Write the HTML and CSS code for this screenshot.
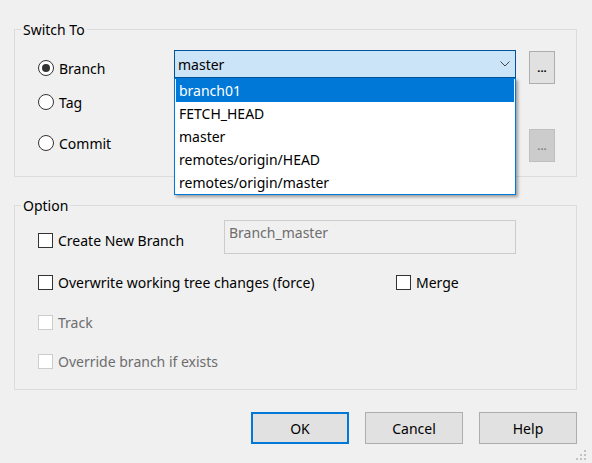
FILE: index.html
```html
<!DOCTYPE html>
<html>
<head>
<meta charset="utf-8">
<link rel="stylesheet" href="styles.css">
</head>
<body>
<div class="dialog">
  <fieldset class="group group-switch">
    <legend>Switch To</legend>
    <div class="switch-grid">
      <label class="opt opt-branch"><span class="radio checked"></span>Branch</label>
      <div class="combo-wrap">
        <div class="combo">
          <span>master</span>
          <svg class="chev" width="10" height="6" viewBox="0 0 10 6"><path d="M0.5 0.5 L5 5 L9.5 0.5" fill="none" stroke="#444" stroke-width="1"/></svg>
        </div>
        <ul class="dropdown">
          <li class="sel">branch01</li>
          <li>FETCH_HEAD</li>
          <li>master</li>
          <li>remotes/origin/HEAD</li>
          <li>remotes/origin/master</li>
        </ul>
      </div>
      <button class="more btn1">...</button>
      <label class="opt opt-tag"><span class="radio"></span>Tag</label>
      <label class="opt opt-commit"><span class="radio"></span>Commit</label>
      <div class="commit-box"></div>
      <button class="more btn2 disabled">...</button>
    </div>
  </fieldset>

  <fieldset class="group group-option">
    <legend>Option</legend>
    <div class="option-body">
      <div class="row row-a">
        <label class="chk chk-create"><span class="box"></span>Create New Branch</label>
        <div class="textbox">Branch_master</div>
      </div>
      <div class="row row-b">
        <label class="chk chk-overwrite"><span class="box"></span>Overwrite working tree changes (force)</label>
        <label class="chk"><span class="box"></span>Merge</label>
      </div>
      <div class="row row-c">
        <label class="chk disabled"><span class="box"></span>Track</label>
      </div>
      <div class="row row-d">
        <label class="chk disabled"><span class="box"></span>Override branch if exists</label>
      </div>
    </div>
  </fieldset>

  <div class="buttons">
    <button class="btn default">OK</button>
    <button class="btn">Cancel</button>
    <button class="btn">Help</button>
  </div>

  <svg class="grip" width="12" height="10" viewBox="0 0 12 10">
    <rect x="8" y="0" width="2" height="2" fill="#c2c2c2"/>
    <rect x="4" y="4" width="2" height="2" fill="#c2c2c2"/>
    <rect x="8" y="4" width="2" height="2" fill="#c2c2c2"/>
    <rect x="0" y="8" width="2" height="2" fill="#c2c2c2"/>
    <rect x="4" y="8" width="2" height="2" fill="#c2c2c2"/>
    <rect x="8" y="8" width="2" height="2" fill="#c2c2c2"/>
  </svg>
</div>
</body>
</html>
```

FILE: styles.css
```css
html, body {
  margin: 0;
  padding: 0;
  background: #f0f0f0;
}
body {
  font-family: "Noto Sans", "Open Sans", sans-serif;
  font-size: 14px;
  color: #000;
  width: 592px;
  height: 463px;
  overflow: hidden;
}
.dialog {
  position: relative;
  width: 592px;
  height: 463px;
  box-sizing: border-box;
  padding: 21px 15px 0 14px;
}
.group {
  margin: 0;
  padding: 0;
  border: 1px solid #dcdcdc;
  min-width: 0;
}
.group legend {
  margin-left: 6px;
  padding: 0 2px;
  line-height: 17px;
  height: 17px;
}
.switch-grid {
  display: grid;
  grid-template-columns: 123px 342px 26px;
  grid-template-rows: 34px 45px 33px;
  column-gap: 13px;
  padding: 12px 21px 14px 23px;
}
.opt {
  display: flex;
  align-items: center;
  gap: 5px;
  height: 16px;
  align-self: start;
  white-space: nowrap;
}
.opt-branch { grid-row: 1; grid-column: 1; margin-top: 10px; }
.opt-tag { grid-row: 2; grid-column: 1; margin-top: 10px; }
.opt-commit { grid-row: 3; grid-column: 1; margin-top: 6px; }
.radio {
  width: 14px;
  height: 14px;
  border: 1px solid #333;
  border-radius: 50%;
  background: #fff;
  flex: none;
  position: relative;
}
.radio.checked::after {
  content: "";
  position: absolute;
  left: 3px;
  top: 3px;
  width: 8px;
  height: 8px;
  border-radius: 50%;
  background: #333;
}
.combo-wrap {
  grid-row: 1;
  grid-column: 2;
  position: relative;
  align-self: start;
  z-index: 2;
}
.combo {
  height: 28px;
  box-sizing: border-box;
  border: 1px solid #005499;
  background: #cce4f7;
  display: flex;
  align-items: center;
  justify-content: space-between;
  padding: 0 5px 0 3px;
}
.chev { display: block; }
.dropdown {
  position: absolute;
  left: 0;
  top: 28px;
  width: 342px;
  box-sizing: border-box;
  margin: 0;
  padding: 0 1px;
  list-style: none;
  background: #fff;
  border: 1px solid #0078d7;
  box-shadow: 2px 2px 3px rgba(0, 0, 0, 0.35);
}
.dropdown li {
  height: 23px;
  line-height: 23px;
  padding-left: 3px;
  white-space: nowrap;
}
.dropdown li.sel {
  background: #0078d7;
  color: #fff;
}
.commit-box {
  grid-row: 3;
  grid-column: 2;
  height: 26px;
  border: 1px solid #ccc;
  background: #fff;
}
.more {
  width: 26px;
  height: 33px;
  box-sizing: border-box;
  border: 1px solid #adadad;
  background: #e1e1e1;
  font-family: inherit;
  font-size: 11px;
  font-weight: bold;
  color: #000;
  padding: 0;
  line-height: 1;
}
.btn1 { grid-row: 1; grid-column: 3; margin-top: 1px; }
.btn2 { grid-row: 3; grid-column: 3; }
.more.disabled {
  background: #cccccc;
  border-color: #bfbfbf;
  color: #838383;
}
.group-option {
  margin-top: 20px;
}
.option-body {
  padding: 6px 21px 20px 23px;
}
.row {
  display: flex;
  align-items: flex-start;
}
.chk {
  display: flex;
  align-items: center;
  gap: 5px;
  height: 15px;
  white-space: nowrap;
}
.box {
  width: 13px;
  height: 13px;
  border: 1px solid #333;
  background: #fff;
  flex: none;
}
.chk.disabled { color: #6d6d6d; }
.chk.disabled .box { border-color: #cccccc; background: #fff; }
.chk-create { width: 186px; margin-top: 13px; }
.chk-overwrite { width: 358px; }
.textbox {
  width: 292px;
  height: 34px;
  box-sizing: border-box;
  border: 1px solid #cccccc;
  background: #f0f0f0;
  color: #6d6d6d;
  padding: 2px 4px;
  line-height: 20px;
}
.row-b { margin-top: 21px; }
.row-c { margin-top: 25px; }
.row-d { margin-top: 24px; }
.buttons {
  display: flex;
  justify-content: flex-end;
  gap: 16px;
  margin-top: 22px;
}
.btn {
  width: 98px;
  height: 32px;
  box-sizing: border-box;
  border: 1px solid #adadad;
  background: #e1e1e1;
  font-family: inherit;
  font-size: 14px;
  color: #000;
  padding: 0;
}
.btn.default {
  border: 2px solid #0078d7;
}
.grip {
  position: absolute;
  right: 4px;
  bottom: 3px;
}
```
